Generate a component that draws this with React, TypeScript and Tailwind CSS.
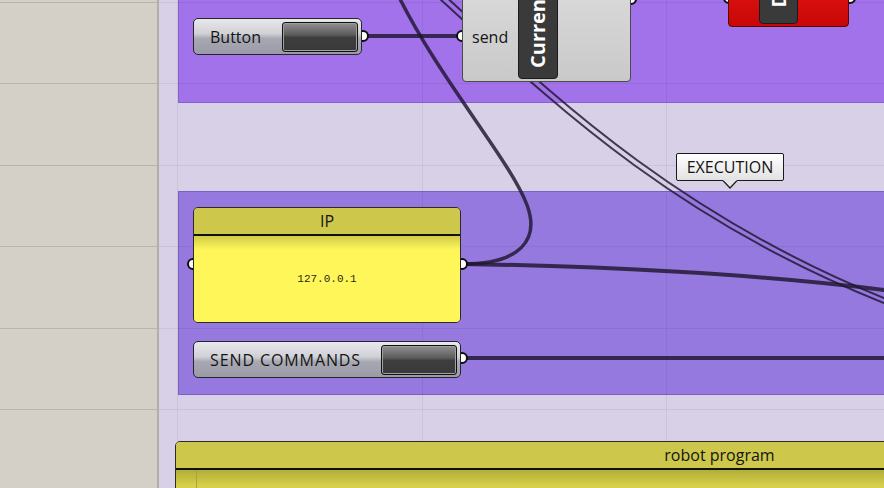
import React from 'react';

// canvas-local coordinates (canvas starts 159px from the left edge)
const gridX = [18, 263, 507];
const gridY = [2, 83, 165, 246, 328, 409];

function Port({ pos }: { pos: string }) {
  return <div className={`absolute h-[12px] w-[12px] rounded-full border-[2.5px] border-[#0d0d0d] bg-white ${pos}`} />;
}

function ToggleButton({ label, pos, text = '' }: { label: string; pos: string; text?: string }) {
  return (
    <div
      className={`absolute flex h-[37px] items-center justify-between rounded-[5px] border border-[#262626] bg-[linear-gradient(to_bottom,#e8e8ec,#d0d0d6_42%,#a8a8b3_56%,#9b9ba7)] pl-[16px] pr-[3px] ${pos}`}
    >
      <span className={`whitespace-nowrap text-[16px] leading-none text-[#141414] ${text}`}>{label}</span>
      <div className="h-[30px] w-[76px] rounded-[3px] border border-[#111] bg-[linear-gradient(to_bottom,#909090,#5c5c5c_42%,#3e3e3e_52%,#393939)] shadow-[inset_0_0_0_1px_#a0a0a0]" />
    </div>
  );
}

export default function App() {
  return (
    <div className="flex h-[488px] w-[884px] overflow-hidden bg-[#d8d0e6] font-['Open_Sans',sans-serif]">
      {/* left panel */}
      <aside className="flex w-[159px] shrink-0 flex-col border-r-2 border-[#b3afa7] bg-[#d4d0c8] pt-[2px]">
        {gridY.slice(1).map((y, i) => (
          <div key={y} className="border-t border-[#b8b4ac]" style={{ height: y - gridY[i] }} />
        ))}
        <div className="flex-1 border-t border-[#b8b4ac]" />
      </aside>

      {/* canvas */}
      <main className="relative flex-1 overflow-hidden">
        {/* groups */}
        <div className="absolute left-[19px] right-[-2px] top-[-2px] h-[105px] border border-[#8760cf] bg-[#a172e9]" />
        <div className="absolute left-[19px] right-[-2px] top-[191px] h-[204px] border border-[#7b5fc4] bg-[#9679df]" />

        {/* grid */}
        {gridX.map((x) => (
          <div key={x} className="absolute top-0 bottom-0 w-px bg-black/[0.06]" style={{ left: x }} />
        ))}
        {gridY.map((y) => (
          <div key={y} className="absolute left-0 right-0 h-px bg-black/[0.06]" style={{ top: y }} />
        ))}

        {/* wires */}
        <svg className="absolute left-0 top-0" width={725} height={488} fill="none">
          <g stroke="#1e1630" strokeOpacity={0.82} strokeLinecap="round">
            <path d="M271,-10 C361,70 491,210 725,303" strokeWidth={2} />
            <path d="M275,-14 C365,66 495,205 725,298" strokeWidth={2} />
            <path d="M304,264 C361,264 381,240 368,205 C351,160 281,80 239,-5" strokeWidth={3.5} />
            <path d="M304,264 C441,266 601,274 725,290" strokeWidth={4} />
            <path d="M204,36 L302,36" strokeWidth={4} />
            <path d="M302,358 L725,358" strokeWidth={4} />
          </g>
        </svg>

        {/* ports (drawn below the components) */}
        <Port pos="left-[198px] top-[30px]" />
        <Port pos="left-[297px] top-[30px]" />
        <Port pos="left-[466px] top-[-7px]" />
        <Port pos="left-[564px] top-[-8px]" />
        <Port pos="left-[685px] top-[-8px]" />
        <Port pos="left-[28px] top-[258px]" />
        <Port pos="left-[297px] top-[258px]" />
        <Port pos="left-[297px] top-[352px]" />

        <ToggleButton label="Button" pos="left-[34px] top-[18px] w-[169px]" />

        {/* Current position component */}
        <div className="absolute left-[303px] top-[-10px] flex h-[92px] w-[169px] rounded-b-[4px] border border-[#4a4a4a] bg-[linear-gradient(to_bottom,#d9d9d9,#c9c9c9)]">
          <div className="w-[55px] pl-[9px] pt-[36px] text-[16px] leading-[20px] text-[#141414]">send</div>
          <div className="relative h-[88px] w-[40px] overflow-hidden rounded-b-[4px] border border-[#1c1c1c] bg-[#3a3a3a]">
            <div className="absolute bottom-[10px] left-0 right-0 flex justify-center">
              <span className="rotate-180 whitespace-nowrap text-[20px] font-bold leading-none text-white [writing-mode:vertical-rl]">
                CurrentPosition
              </span>
            </div>
          </div>
          <div className="flex-1 pr-[18px] text-right">
            <div className="-mt-[12px] text-[16px] leading-[20px] text-[#141414]">msg</div>
          </div>
        </div>

        {/* red component */}
        <div className="absolute left-[569px] top-[-10px] h-[37px] w-[121px] rounded-b-[4px] border border-[#5a0000] bg-[linear-gradient(to_bottom,#dc1010,#c80707)] pl-[30px]">
          <div className="relative h-[33px] w-[39px] overflow-hidden rounded-b-[4px] border border-[#1c1c1c] bg-[#3a3a3a]">
            <div className="absolute bottom-[15px] left-0 right-0 flex justify-center">
              <span className="rotate-180 whitespace-nowrap text-[20px] font-bold leading-none text-white [writing-mode:vertical-rl]">
                Disconnect
              </span>
            </div>
          </div>
        </div>

        {/* group label */}
        <div className="absolute left-[517px] top-[153px] flex w-[108px] flex-col items-center">
          <div className="flex h-[28px] w-full items-center justify-center rounded-[2px] border border-[#1a1a1a] bg-[linear-gradient(to_bottom,#ffffff,#e2e2e2)] text-[16px] leading-none text-[#141414]">
            EXECUTION
          </div>
          <svg width="16" height="9" className="-mt-px">
            <path d="M0.5,0 L8,8 L15.5,0" fill="#e6e6e6" stroke="#1a1a1a" strokeWidth={1.2} />
            <path d="M1.5,0 L14.5,0" stroke="#e4e4e4" strokeWidth={1.6} />
          </svg>
        </div>

        {/* IP panel */}
        <div className="absolute left-[34px] top-[207px] flex h-[116px] w-[268px] flex-col overflow-hidden rounded-[5px] border border-[#2a2a2a]">
          <div className="flex h-[28px] shrink-0 items-center justify-center border-b-2 border-[#111] bg-[#cdc84b] text-[16px] leading-none text-[#141414]">
            IP
          </div>
          <div className="flex flex-1 items-center justify-center bg-[linear-gradient(to_bottom,#d2cb46,#fff75a_14px)] font-['Liberation_Mono',monospace] text-[11px] text-[#2a2a10]">
            127.0.0.1
          </div>
        </div>

        <ToggleButton label="SEND COMMANDS" pos="left-[34px] top-[341px] w-[268px]" text="tracking-[0.9px]" />

        {/* robot program panel */}
        <div className="absolute left-[16px] top-[441px] flex h-[70px] w-[1089px] flex-col overflow-hidden rounded-[5px] border border-[#2a2a2a]">
          <div className="flex h-[28px] shrink-0 items-center justify-center border-b-2 border-[#111] bg-[#cdc84b] text-[16px] leading-none text-[#141414]">
            robot program
          </div>
          <div className="flex flex-1 bg-[linear-gradient(to_bottom,#b2ad38,#d6d04c_16px)]">
            <div className="w-[21px] border-r border-[#aaa53a]" />
          </div>
        </div>
      </main>
    </div>
  );
}
